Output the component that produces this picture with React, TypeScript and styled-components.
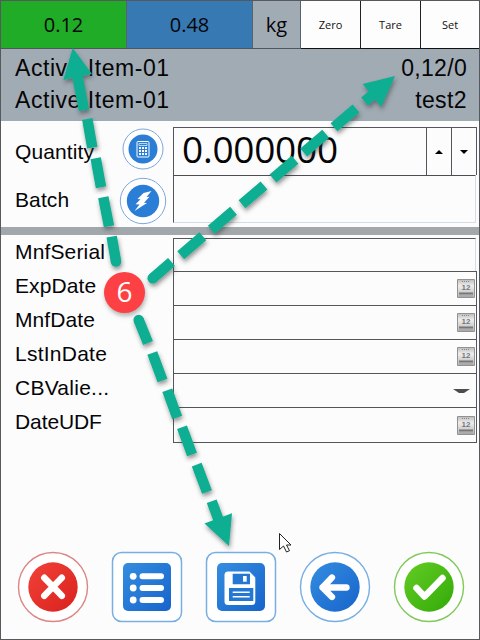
import React from "react";
import styled, { createGlobalStyle } from "styled-components";

const Global = createGlobalStyle`
  *{box-sizing:border-box}
  html,body{margin:0;padding:0;overflow:hidden;background:#fcfcfd}
`;
const Screen = styled.main`
  position:relative;width:480px;height:640px;overflow:hidden;display:flex;flex-direction:column;
  background:#fcfcfd;border:1px solid #55585c;color:#050507;font-family:"Liberation Sans",Arial,sans-serif;
`;
const TopBar = styled.header`
  display:grid;grid-template-columns:126px 126px 48px 60px 60px 58px;height:48px;
  font-family:"Open Sans","Noto Sans",sans-serif;
`;
const Reading = styled.div<{ $bg: string }>`
  display:flex;align-items:center;justify-content:center;background:${p => p.$bg};
  border-right:1px solid #59636b;border-bottom:1px solid #50565b;font-size:20px;padding-bottom:1px;
`;
const ScaleButton = styled.button`
  appearance:none;border:0;border-right:1px solid #222;border-bottom:1px solid #111;border-radius:0;background:#fdfdfe;padding:0;
  font:11px "Open Sans","Noto Sans",sans-serif;color:#111;
  &:last-child{border-right:0}
`;
const Summary = styled.section`
  height:72px;background:#a1abb4;padding:3px 12px 0 14px;font-size:23px;
`;
const SummaryRow = styled.div`
  display:flex;justify-content:space-between;height:32px;line-height:32px;
`;
const Spaced = styled.span<{ $ls?: number }>`letter-spacing:${p => p.$ls ?? 0}px;`;
const Entry = styled.section`
  height:106px;display:grid;grid-template-columns:112px 60px 304px;grid-template-rows:48px 48px;padding-top:6px;
`;
const Label = styled.label<{ $ls?: number; $pad?: number; $up?: number }>`
  padding:${p => p.$pad ?? 0}px 0 0 14px;margin-top:${p => -(p.$up ?? 0)}px;
  font-size:21px;line-height:34px;white-space:nowrap;letter-spacing:${p => p.$ls ?? 0}px;
`;
const IconCell = styled.div<{ $top: number }>`
  display:flex;justify-content:center;align-items:flex-start;padding-top:${p => p.$top}px;
  svg{flex:none;display:block}
`;
const QuantityBox = styled.div`
  display:grid;grid-template-columns:1fr 25px 25px;border:1px solid #55565a;border-bottom:0;
  font:37px/41px "Open Sans","Noto Sans",sans-serif;letter-spacing:-.25px;padding-left:8px;
`;
const Step = styled.div`
  border-left:1px solid #55565a;display:flex;align-items:center;justify-content:center;
`;
const BatchBox = styled.div`
  border:1px solid #d4dde3;border-top:1px solid #4d4e52;border-left-color:#55565a;margin-right:1px;
`;
const Divider = styled.div`height:8px;background:#a1a7ab;flex:none;`;
const Fields = styled.section`
  display:grid;grid-template-columns:172px 304px;grid-template-rows:33px repeat(5,34px);padding-top:3px;
`;
const Field = styled.div<{ $plain?: boolean; $last?: boolean }>`
  border:1px solid #55565a;border-bottom:${p => p.$last ? "1px solid #55565a" : "0"};
  height:${p => p.$last ? 36 : p.$plain ? 33 : 34}px;
  ${p => p.$plain && "border-right-color:#d4dde3;margin-right:1px;"}
  display:flex;align-items:center;justify-content:flex-end;padding-right:1px;
`;
const Actions = styled.footer`
  position:absolute;left:16px;top:550px;width:448px;display:flex;justify-content:space-between;
  svg{display:block}
`;
const Annotation = styled.svg`position:absolute;left:-1px;top:-1px;pointer-events:none;`;
const Marker = styled.div`
  position:absolute;left:103px;top:271px;width:41px;height:41px;border-radius:50%;background:#fd4044;color:white;
  display:flex;align-items:center;justify-content:center;font:500 28px/38px "Open Sans","Noto Sans",sans-serif;
  padding-bottom:3px;box-shadow:1px 3px 4px #7778;
`;

const CalendarIcon = () => <svg width="18" height="19" viewBox="0 0 18 19">
  <defs><linearGradient id="cal" x2="0" y2="1"><stop stopColor="#bbb"/><stop offset=".35" stopColor="#eee"/><stop offset="1" stopColor="#b5b5b5"/></linearGradient></defs>
  <path fill="url(#cal)" stroke="#929292" d="M.5.5h17v18H.5z"/><path d="M5 2.5h8" stroke="#888" strokeDasharray="1 1"/>
  <text x="9" y="10.8" textAnchor="middle" fontFamily="Liberation Sans" fontSize="8" fontWeight="bold" fill="#777">12</text>
  <path d="M2 14.5h14" stroke="#777" strokeWidth="2"/><path d="M2 17h14" stroke="#999"/>
</svg>;
const Calculator = () => <svg width="42" height="42" viewBox="0 0 42 42">
  <circle cx="21" cy="21" r="20" fill="#fff" stroke="#7da7da"/><circle cx="21" cy="21" r="14.5" fill="#2b7ed5"/>
  <rect x="15" y="13.5" width="12" height="15.5" rx="1" fill="none" stroke="#fff"/>
  <path d="M17 15.5h8v2h-8z" fill="none" stroke="#d8ecff" strokeWidth=".8"/>
  <path d="M17 20h8M17 23h8M17 26h8" stroke="#fff" strokeWidth="2" strokeDasharray="2 1"/>
</svg>;
const Lightning = () => <svg width="48" height="48" viewBox="0 0 48 48">
  <circle cx="24" cy="24" r="22.7" fill="#fff" stroke="#7da7da"/><circle cx="24" cy="24" r="16.2" fill="#2b7ed5"/>
  <path fill="#fff" d="m24.5 16 8-2-5 6 3-.2-5.5 6 3 .2L15.5 34l5-6.5-4-.3 5-5-3-.2z"/>
</svg>;

type ActionKind = "cancel" | "list" | "save" | "back" | "confirm";
const ActionIcon = ({ kind }: { kind: ActionKind }) => {
  const square = kind === "list" || kind === "save";
  const [c1, c2, edge] = kind === "cancel" ? ["#f24239", "#d9211d", "#dc8585"] : kind === "confirm" ? ["#64cc25", "#32aa08", "#7fca58"] : ["#348de0", "#1764cb", "#78aee2"];
  return <svg width="72" height="72" viewBox="0 0 72 72">
    <defs><linearGradient id={kind} x2="1" y2="1"><stop stopColor={c1}/><stop offset="1" stopColor={c2}/></linearGradient></defs>
    {square ? <><rect x="1.5" y="1.5" width="69" height="69" rx="9" fill="#fff" stroke={edge} strokeWidth="1.5"/><rect x="12" y="12" width="48" height="48" rx="5" fill={`url(#${kind})`}/></> : <><circle cx="36" cy="36" r="34.5" fill="#fff" stroke={edge} strokeWidth="1.4"/><circle cx="36" cy="36" r="24.7" fill={`url(#${kind})`}/></>}
    {kind === "cancel" && <path d="m27.3 26.8 17.5 18m0-18-17.5 18" stroke="#fff" strokeWidth="6.5" strokeLinecap="round"/>}
    {kind === "list" && <><path d="M31.5 25.3h18.5M31.5 37h18.5M31.5 49h18.5" stroke="#fff" strokeWidth="6" strokeLinecap="round"/><g fill="#fff"><circle cx="22.2" cy="25.3" r="3.4"/><circle cx="22.2" cy="37" r="3.4"/><circle cx="22.2" cy="49" r="3.4"/></g></>}
    {kind === "save" && <><path d="M23 20.5h21.5l5.8 6V50.5a3.5 3.5 0 0 1-3.5 3.5H23a3.5 3.5 0 0 1-3.5-3.5V24a3.5 3.5 0 0 1 3.5-3.5Z" fill="#fff"/>
      <path d="M27.7 22.7H45v10.6H27.7zM24 37h24.3v13H24z" fill="#2477d2"/>
      <path d="M38 25h3.7v5.7H38z" fill="#fff"/><path d="M27.7 41.3h17M27.7 45.8h17" stroke="#fff" strokeWidth="1.4"/></>}
    {kind === "back" && <path d="M47.5 36.5h-24m9.5-10-9.5 10 9.5 9.5" stroke="#fff" fill="none" strokeWidth="6.3" strokeLinecap="round" strokeLinejoin="round"/>}
    {kind === "confirm" && <path d="m23.5 37 8 8.5L49.5 27" stroke="#fff" fill="none" strokeWidth="6.5" strokeLinecap="round" strokeLinejoin="round"/>}
  </svg>;
};

const fields = [
  ["MnfSerial", "plain", 0.15], ["ExpDate", "date", 0.1], ["MnfDate", "date", 0.1],
  ["LstInDate", "date", 0.25], ["CBValie...", "select", 0.25], ["DateUDF", "date", -0.1],
] as const;

export default function App() {
  return <><Global/><Screen>
    <TopBar>
      <Reading $bg="#20ac27">0.12</Reading><Reading $bg="#3779b3">0.48</Reading><Reading $bg="#a1abb4">kg</Reading>
      <ScaleButton>Zero</ScaleButton><ScaleButton>Tare</ScaleButton><ScaleButton>Set</ScaleButton>
    </TopBar>
    <Summary>
      <SummaryRow><Spaced $ls={.55}>Active Item-01</Spaced><Spaced $ls={.3}>0,12/0</Spaced></SummaryRow>
      <SummaryRow><Spaced $ls={.55}>Active Item-01</Spaced><Spaced $ls={.4}>test2</Spaced></SummaryRow>
    </Summary>
    <Entry>
      <Label $pad={8} $ls={.1}>Quantity</Label><IconCell $top={1}><Calculator/></IconCell>
      <QuantityBox><span>0.000000</span><Step><svg width="8" height="4"><path d="M0 4 4 0l4 4z"/></svg></Step><Step><svg width="8" height="4"><path d="m0 0 4 4 4-4z"/></svg></Step></QuantityBox>
      <Label $pad={8} $ls={.1}>Batch</Label><IconCell $top={2}><Lightning/></IconCell><BatchBox/>
    </Entry>
    <Divider/>
    <Fields>{fields.map(([name, kind, spacing], i) => <React.Fragment key={name}>
      <Label $ls={spacing} $up={i === 0 ? 3 : 2}>{name}</Label><Field $plain={kind === "plain"} $last={i === 5}>
        {kind === "date" && <CalendarIcon/>}{kind === "select" && <svg width="22" height="4"><path d="M0 0h17l-6 4H6z" fill="#4d4d50"/></svg>}
      </Field></React.Fragment>)}</Fields>
    <Actions>{(["cancel", "list", "save", "back", "confirm"] as const).map(k => <ActionIcon key={k} kind={k}/>)}</Actions>
    <Annotation width="480" height="640" viewBox="0 0 480 640">
      <defs><filter id="shadow" x="-20%" y="-20%" width="140%" height="140%"><feDropShadow dx="1" dy="3" stdDeviation="2" floodColor="#333" floodOpacity=".5"/></filter></defs>
      <g filter="url(#shadow)" stroke="#0bae91" strokeWidth="10.5" fill="none">
        <path d="M116 261.5 111.7 236.7M109 226.3 103.3 197.3M101 187.3 95.7 158.3M92.3 147.7 87.3 119M84 110.3 77 74"/>
        <path d="M152.7 278.3 171.5 262M180.7 255.3 202.8 236.3M211.3 229.7 233.5 210.8M242 204.3 264 185.5M273 178.5 295 159.8M303.7 152.6 325.7 133.8M334 127.3 356 108.5M364.6 101.5 376 92"/>
        <path d="M138.7 320 148 343M152.3 353 162.5 380.5M167.3 390.3 177.2 417.5M182 427.3 192 454.5M196.7 464.7 207 492M211.7 501.3 219 521"/>
        <g fill="#0bae91" stroke="none"><circle cx="116" cy="261.5" r="5.25"/><circle cx="152.7" cy="278.3" r="5.25"/><circle cx="138.7" cy="320" r="5.25"/>
          <path d="m72.7 48 19.3 26-28.7 6z"/><path d="m395 76-13.7 31-18.6-23z"/><path d="m229 546-24.5-22.5 27.5-10.3z"/></g>
      </g>
      <path d="M279.5 533.5v16l4-3.5 3 6 3-1.3-3-5.7h4.5z" fill="#fff" stroke="#222"/>
    </Annotation>
    <Marker>6</Marker>
  </Screen></>;
}
